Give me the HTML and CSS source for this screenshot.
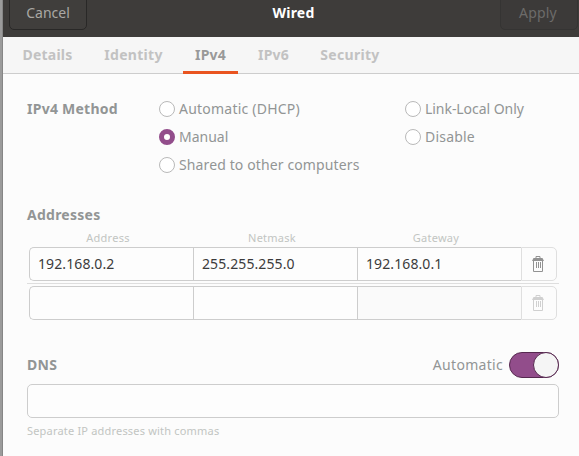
FILE: index.html
```html
<!DOCTYPE html>
<html lang="en">
<head>
<meta charset="utf-8">
<title>Wired</title>
<link rel="stylesheet" href="styles.css">
</head>
<body>
<svg width="0" height="0" class="defs">
  <symbol id="trash" viewBox="0 0 12 16">
    <path d="M4 2.5V.5h4v2M1.5 5v10.5h9V5M4.5 6v6M6.5 6v6M8.5 6v6" fill="none" stroke="currentColor"/>
    <path d="M1.5 2h9L12 5H0z" fill="currentColor"/>
  </symbol>
</svg>
<div class="window">
  <header class="titlebar">
    <button class="btn cancel">Cancel</button>
    <h1>Wired</h1>
    <button class="btn apply">Apply</button>
  </header>
  <nav class="tabs">
    <a class="tab w-details">Details</a>
    <a class="tab w-identity">Identity</a>
    <a class="tab active">IPv4</a>
    <a class="tab">IPv6</a>
    <a class="tab w-security">Security</a>
  </nav>
  <main>
    <section class="method">
      <h2 class="method-title">IPv4 Method</h2>
      <div class="options">
        <label><i class="radio"></i><span class="t-dhcp">Automatic (DHCP)</span></label>
        <label><i class="radio"></i><span class="t-link">Link-Local Only</span></label>
        <label><i class="radio on"></i><span class="t-manual">Manual</span></label>
        <label><i class="radio"></i><span class="t-disable">Disable</span></label>
        <label><i class="radio"></i><span class="t-shared">Shared to other computers</span></label>
      </div>
    </section>
    <h2 class="addr-title">Addresses</h2>
    <div class="heads"><span>Address</span><span>Netmask</span><span>Gateway</span></div>
    <div class="row">
      <div class="cell">192.168.0.2</div><div class="cell">255.255.255.0</div><div class="cell">192.168.0.1</div>
      <div class="delete"><svg width="12" height="16"><use href="#trash"/></svg></div>
    </div>
    <div class="rule"></div>
    <div class="row">
      <div class="cell"></div><div class="cell"></div><div class="cell off"></div>
      <div class="delete off"><svg width="12" height="16"><use href="#trash"/></svg></div>
    </div>
    <div class="dns">
      <h2 class="dns-title">DNS</h2>
      <span class="auto">Automatic</span>
      <div class="switch"><i></i></div>
    </div>
    <div class="entry"></div>
    <p class="hint">Separate IP addresses with commas</p>
  </main>
</div>
</body>
</html>
```
FILE: styles.css
```css
* { box-sizing: border-box; }
body { margin: 0; height: 456px; overflow: hidden; background: #fcfcfc; font: 14px/20px "Noto Sans", sans-serif; color: #929595; }
h1, h2, p { margin: 0; font-size: 14px; line-height: 20px; }
.defs { display: block; }
.window { height: 456px; border-left: 2px solid #9b9b9b; box-shadow: inset 1px 0 #868686; padding-left: 1px; }
.titlebar { height: 37px; background: #3e3c3a; display: grid; grid-template-columns: 78px 1fr 78px; padding: 0 1px 0 6px; }
.btn { height: 34px; margin-top: -4px; padding: 0; border: 1px solid #292827; border-radius: 0 0 5px 5px; background: #403e3c; color: #aaa8a4; font: inherit; }
.btn.apply { color: #6c6b69; border-color: #353433; background: #3c3a39; padding-right: 2px; letter-spacing: .2px; }
h1 { color: #fff; text-align: center; padding-top: 3px; letter-spacing: .2px; }
.tabs { height: 37px; display: flex; gap: 8px; padding-left: 8px; background: #f6f6f6; border-bottom: 1px solid #cdcdcd; }
.tab { width: 55px; height: 37px; padding-top: 8px; text-align: center; font-weight: 700; color: #c2c2c2; white-space: nowrap; letter-spacing: .2px; }
.tab.active { color: #999; border-bottom: 3px solid #e95420; }
.w-details { width: 74px; padding-right: 1px; }
.w-identity { width: 82px; padding-right: 1px; letter-spacing: .3px; }
.w-security { width: 83px; padding-right: 1px; letter-spacing: .3px; }
main { padding: 21px 20px 0 24px; }
h2 { color: #929595; letter-spacing: .25px; }
.method { display: flex; }
.method-title { width: 132px; margin-top: 4px; }
.options { display: grid; grid-template-columns: 246px 154px; grid-auto-rows: 28px; white-space: nowrap; }
label { display: flex; align-items: center; gap: 4px; }
.t-dhcp { letter-spacing: .22px; }
.t-link { letter-spacing: -.05px; }
.t-disable { letter-spacing: .2px; }
.t-shared { letter-spacing: .12px; }
.radio { width: 16px; height: 16px; border: 1px solid #b9b9b9; border-radius: 50%; background: #fff; }
.radio.on { border: 5.5px solid #924d8b; }
.addr-title { margin-top: 26px; }
.heads { display: grid; grid-template-columns: repeat(3, 164px); margin: 3px 0 0 -1px; text-align: center; font-size: 11px; line-height: 19px; letter-spacing: .25px; color: #c2c5c2; }
.row { display: grid; grid-template-columns: 164px 164px 164px 36px; width: 528px; height: 34px; margin-left: 2px; }
.cell { border: 1px solid #cdcdcd; border-right: 0; padding: 6px 8px; color: #3b3b3b; background: #fdfdfd; letter-spacing: .1px; }
.cell:first-child { border-radius: 5px 0 0 5px; }
.cell.off { background: #fafafa; }
.delete { border: 1px solid #dfdfdf; border-radius: 0 5px 5px 0; display: flex; align-items: center; justify-content: center; padding-right: 2px; color: #929292; }
.delete.off { color: #d0d0d0; }
.rule { height: 1px; background: #dedede; margin: 2px 0; }
.dns { display: flex; align-items: center; height: 26px; margin-top: 32px; }
.dns-title { margin-right: auto; }
.auto { margin-right: 6px; letter-spacing: .3px; }
.switch { width: 50px; height: 26px; border: 1px solid #56284f; border-radius: 13px; background: #924d8b; display: flex; justify-content: flex-end; }
.switch i { width: 26px; height: 26px; margin: -1px; border: 1px solid #56284f; border-radius: 50%; background: #f5f5f5; }
.entry { height: 34px; margin-top: 6px; border: 1px solid #cdcdcd; border-radius: 5px; background: #fdfdfd; }
.hint { margin-top: 3px; font-size: 11px; letter-spacing: .19px; color: #c2c5c2; }
```
